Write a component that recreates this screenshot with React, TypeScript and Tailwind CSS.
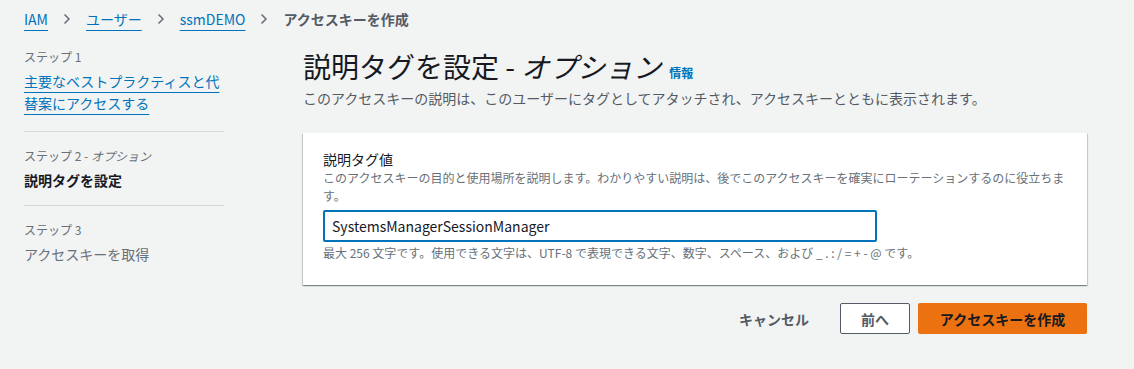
import { ChevronRight } from 'lucide-react';

const font = "font-['Noto_Sans_CJK_JP','Noto_Sans',sans-serif]";

const crumbs = ['IAM', 'ユーザー', 'ssmDEMO'];

const Breadcrumbs = () => (
  <nav className="flex h-[38px] items-center gap-[11px] px-6 text-sm">
    {crumbs.map((c) => (
      <div key={c} className="flex items-center gap-[11px]">
        <a className="leading-5 text-[#0073bb] underline decoration-1 underline-offset-[5px]">{c}</a>
        <ChevronRight className="size-4 text-[#687078]" strokeWidth={2.5} />
      </div>
    ))}
    <span className="font-bold text-[#545b64]">アクセスキーを作成</span>
  </nav>
);

const StepNav = () => (
  <aside className="w-[200px] shrink-0 pt-[9px]">
    <div className="pb-[17px]">
      <div className="text-xs leading-5 text-[#687078]">ステップ 1</div>
      <a className="mt-[3px] block text-sm leading-[22px] text-[#0073bb] underline decoration-1 underline-offset-[5px]">
        主要なベストプラクティスと代替案にアクセスする
      </a>
    </div>
    <div className="border-t border-[#d5dbdb] pt-[14px] pb-[14px]">
      <div className="text-xs leading-5 text-[#687078]">
        ステップ 2 - <span className="italic">オプション</span>
      </div>
      <div className="mt-[3px] text-sm font-bold leading-[22px] text-[#16191f]">説明タグを設定</div>
    </div>
    <div className="border-t border-[#d5dbdb] pt-[14px]">
      <div className="text-xs leading-5 text-[#687078]">ステップ 3</div>
      <div className="mt-[3px] text-sm leading-[22px] text-[#687078]">アクセスキーを取得</div>
    </div>
  </aside>
);

export default function App() {
  return (
    <div className={`${font} min-h-[369px] w-[1134px] bg-[#f2f3f3] text-[#16191f]`}>
      <Breadcrumbs />
      <div className="flex gap-[79px] px-6">
        <StepNav />
        <main className="w-[784px]">
          <div className="flex items-end gap-2 pt-[10px]">
            <h1 className="text-[28px] leading-9 text-[#16191f]">
              説明タグを設定 - <span className="italic">オプション</span>
            </h1>
            <a className="pb-[3px] text-xs font-bold text-[#0073bb]">情報</a>
          </div>
          <p className="mt-[4px] text-sm leading-5 text-[#545b64]">
            このアクセスキーの説明は、このユーザーにタグとしてアタッチされ、アクセスキーとともに表示されます。
          </p>
          <section className="mt-[25px] bg-white px-5 pt-[16px] pb-[23px] shadow-[0_1px_1px_0_rgba(0,28,36,0.3),1px_1px_1px_0_rgba(0,28,36,0.15),-1px_1px_1px_0_rgba(0,28,36,0.15)]">
            <label className="block text-sm leading-5 text-[#16191f]">説明タグ値</label>
            <p className="text-xs leading-[18px] text-[#687078]">
              このアクセスキーの目的と使用場所を説明します。わかりやすい説明は、後でこのアクセスキーを確実にローテーションするのに役立ちます。
            </p>
            <div className="mt-[5px] flex h-[32px] w-[554px] items-center rounded-[2px] border-2 border-[#0073bb] px-[7px] text-sm text-[#16191f]">
              SystemsManagerSessionManager
            </div>
            <p className="mt-[2px] text-xs leading-[18px] text-[#687078]">
              最大 256 文字です。使用できる文字は、UTF-8 で表現できる文字、数字、スペース、および _ . : / = + - @ です。
            </p>
          </section>
          <div className="mt-[18px] flex items-center justify-end">
            <button className="mr-[31px] text-sm font-bold text-[#545b64]">キャンセル</button>
            <button className="mr-2 h-[31px] w-[70px] rounded-[2px] border border-[#545b64] bg-white text-sm font-bold text-[#545b64]">
              前へ
            </button>
            <button className="h-[31px] w-[169px] rounded-[2px] bg-[#ec7211] text-sm font-bold text-[#16191f]">
              アクセスキーを作成
            </button>
          </div>
        </main>
      </div>
    </div>
  );
}
